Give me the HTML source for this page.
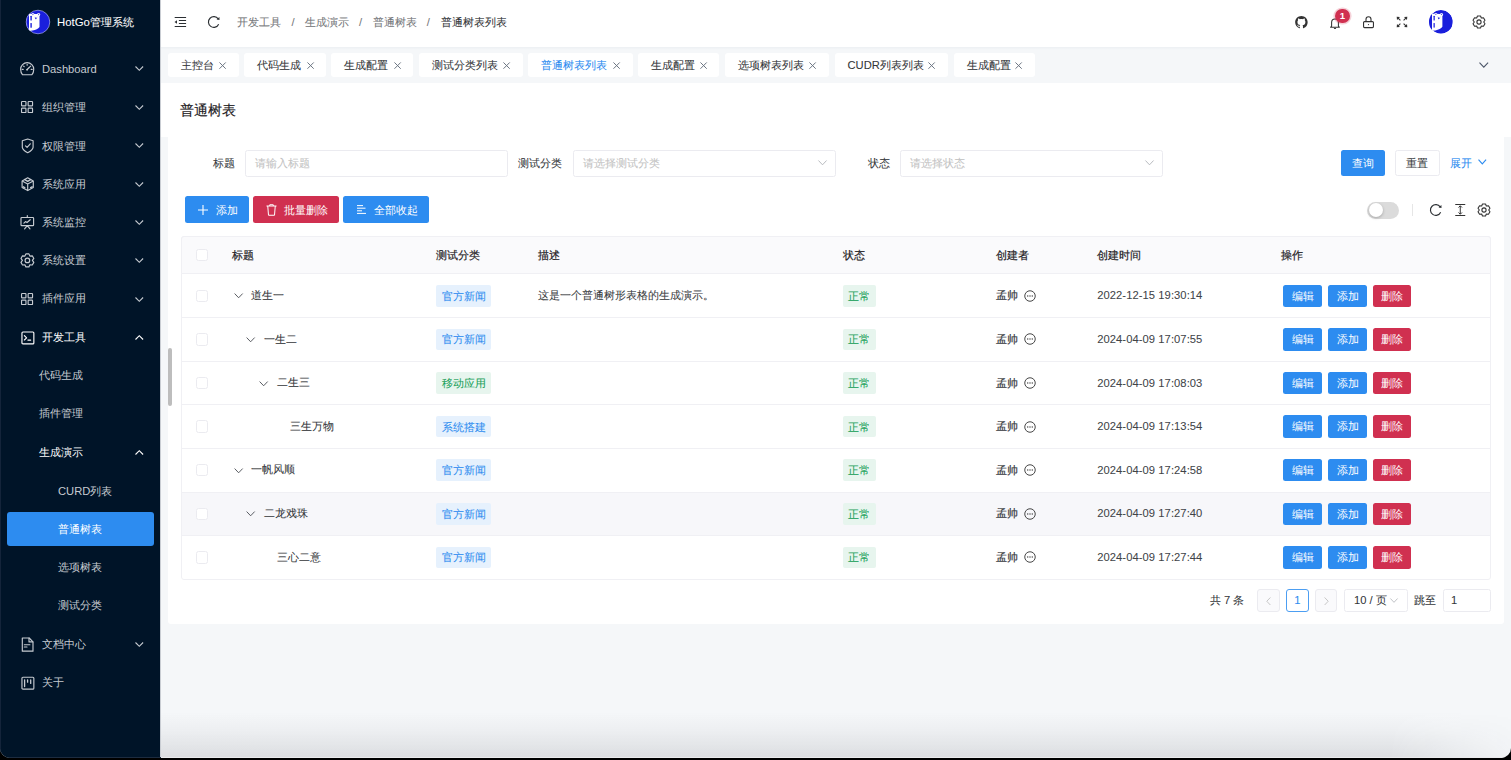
<!DOCTYPE html><html><head><meta charset="utf-8"><style>
*{box-sizing:border-box;margin:0;padding:0}
html,body{width:1511px;height:760px;overflow:hidden;background:#000}
body{font-family:"Liberation Sans",sans-serif;font-size:11.2px;color:#333639;position:relative;-webkit-text-stroke-width:0.06px}
.a{position:absolute;white-space:nowrap}
#win{position:absolute;left:0;top:0;width:1511px;height:758px;border-radius:0 0 10px 10px;overflow:hidden;background:#f5f7f9}
#side{position:absolute;left:0;top:0;width:160px;height:758px;background:#001428}
svg{position:absolute;overflow:visible}
.mt{position:absolute;font-size:11.2px;line-height:14px;color:#c6cbd1;white-space:nowrap;-webkit-text-stroke-width:0}
.tab{position:absolute;top:52.6px;height:24.8px;background:#fff;border-radius:3px}
.tab .t{position:absolute;left:13px;top:5.4px;line-height:14px;font-size:11.2px;color:#333639}
.btn{position:absolute;border-radius:2.5px;color:#fff;-webkit-text-stroke-width:0;font-size:11.2px;line-height:14px;text-align:center}
.tag{position:absolute;border-radius:2px;font-size:11.2px;line-height:14px}
.cb{position:absolute;left:195.5px;width:12.5px;height:12.5px;border:1px solid #ebebf0;border-radius:2.5px;background:#fff}
.inp{position:absolute;border:1px solid #ebebf0;border-radius:2.5px;background:#fff}
.ph{position:absolute;color:#c2c2c2;font-size:11.2px;line-height:14px;white-space:nowrap}
</style></head><body><div id="win">
<div id="side"><div class="a" style="left:0;top:0;width:1px;height:758px;background:#14243a"></div>
<svg style="left:26.2px;top:9.8px" width="24" height="24" viewBox="0 0 24 24"><defs><clipPath id="cl1"><circle cx="12" cy="12" r="12"/></clipPath></defs><g clip-path="url(#cl1)"><circle cx="12" cy="12" r="12" fill="#1a1fdc"/>
<path d="M3.3 3.8 L5.3 3.9 L11.5 4.0 L13.5 5.0 L13.5 17.0 Q11.5 19.6 6.5 20.6 L3.3 21.0 Q0 17 0 12 Q0 7 3.3 3.8 Z" fill="#fff"/>
<path d="M0 0 H3.3 V24 H0 Z" fill="#1a1fdc" opacity="0"/>
<rect x="4.4" y="5.7" width="1.4" height="4.9" rx="0.6" fill="#1a1fdc"/>
<rect x="4.4" y="13.0" width="1.4" height="4.8" rx="0.6" fill="#1a1fdc"/>
<circle cx="6.9" cy="4.5" r="1.6" fill="#fff"/><circle cx="6.9" cy="4.5" r="0.65" fill="#1a1fdc" opacity="0.7"/>
<circle cx="12.6" cy="4.5" r="1.6" fill="#fff"/><circle cx="12.6" cy="4.5" r="0.65" fill="#1a1fdc" opacity="0.7"/>
<ellipse cx="9.9" cy="8.3" rx="0.75" ry="1.0" fill="#1a1fdc"/>
<circle cx="8.4" cy="7.0" r="0.35" fill="#1a1fdc" opacity="0.5"/>
<circle cx="11.3" cy="7.0" r="0.35" fill="#1a1fdc" opacity="0.5"/><path d="M0 0 H3.0 V24 H0Z" fill="#1a1fdc"/></g><circle cx="12" cy="12" r="11.8" fill="none" stroke="#dfe3f5" stroke-width="0.5"/></svg>
<div class="a" style="left:57px;top:14.8px;line-height:14px;font-size:11.35px;color:#fff">HotGo管理系统</div>
<svg style="left:20.0px;top:62.40px" width="14.4" height="13.6" viewBox="0 0 14.4 13.6" fill="none" stroke="#c6cbd1" stroke-width="1.15" stroke-linecap="round" stroke-linejoin="round"><path d="M2.6 12.8 C1.3 11.4 0.65 9.4 0.65 7.2 A6.55 6.55 0 0 1 13.75 7.2 C13.75 9.4 13.1 11.4 11.8 12.8 Z"/><path d="M7.1 7.6 L9.4 5.2" stroke-width="1.3"/><circle cx="7.1" cy="7.7" r="0.9" fill="#c6cbd1" stroke="none"/><path d="M7.15 2.4v0.9M3.6 4.1l.6.6M10.7 4.1l-.6.6M2.2 7.4h1M11.2 7.4h1"/></svg>
<div class="mt" style="left:42px;top:61.90px;color:#c6cbd1">Dashboard</div>
<svg style="left:135.3px;top:66.4px" width="8.6" height="5" viewBox="0 0 8.6 5"><path d="M0.5 0.5 L4.3 4.3 L8.1 0.5" fill="none" stroke="#c6cbd1" stroke-width="1.1"/></svg>
<svg style="left:21.0px;top:101.28px" width="12.2" height="12.2" viewBox="0 0 12.2 12.2" fill="none" stroke="#c6cbd1" stroke-width="1.15" stroke-linecap="round" stroke-linejoin="round"><rect x="0.55" y="0.55" width="4.4" height="4.4" rx="0.6"/><rect x="7.15" y="0.55" width="4.4" height="4.4" rx="0.6"/><rect x="0.55" y="7.15" width="4.4" height="4.4" rx="0.6"/><rect x="7.15" y="7.15" width="4.4" height="4.4" rx="0.6"/></svg>
<div class="mt" style="left:42px;top:100.28px;color:#c6cbd1">组织管理</div>
<svg style="left:135.3px;top:104.8px" width="8.6" height="5" viewBox="0 0 8.6 5"><path d="M0.5 0.5 L4.3 4.3 L8.1 0.5" fill="none" stroke="#c6cbd1" stroke-width="1.1"/></svg>
<svg style="left:20.5px;top:137.85px" width="13.4" height="15.6" viewBox="0 0 13.4 15.6" fill="none" stroke="#c6cbd1" stroke-width="1.15" stroke-linecap="round" stroke-linejoin="round"><path d="M6.7 1.0 L12.1 2.8 V9.4 Q11.6 12.4 6.7 14.8 Q1.8 12.4 1.3 9.4 V2.8 Z"/><path d="M4.5 7.9 L6.1 9.4 L9.3 5.8"/></svg>
<div class="mt" style="left:42px;top:138.65px;color:#c6cbd1">权限管理</div>
<svg style="left:135.3px;top:143.2px" width="8.6" height="5" viewBox="0 0 8.6 5"><path d="M0.5 0.5 L4.3 4.3 L8.1 0.5" fill="none" stroke="#c6cbd1" stroke-width="1.1"/></svg>
<svg style="left:20.5px;top:177.03px" width="13.4" height="14.4" viewBox="0 0 13.4 14.4" fill="none" stroke="#c6cbd1" stroke-width="1.15" stroke-linecap="round" stroke-linejoin="round"><path d="M6.7 0.8 L12.3 3.9 V10.5 L6.7 13.6 L1.1 10.5 V3.9 Z"/><path d="M1.6 4.3 L6.7 7.0 L11.8 4.3 M6.7 7.0 V13.2"/><path d="M3.8 2.6 L6.7 4.3 L9.6 2.6" stroke-width="1.4"/><path d="M2.3 9.8 L3.8 10.6 M11.1 9.8 L9.6 10.6" stroke-width="1.4"/></svg>
<div class="mt" style="left:42px;top:177.03px;color:#c6cbd1">系统应用</div>
<svg style="left:135.3px;top:181.5px" width="8.6" height="5" viewBox="0 0 8.6 5"><path d="M0.5 0.5 L4.3 4.3 L8.1 0.5" fill="none" stroke="#c6cbd1" stroke-width="1.1"/></svg>
<svg style="left:20.0px;top:215.10px" width="14.6" height="14.6" viewBox="0 0 14.6 14.6" fill="none" stroke="#c6cbd1" stroke-width="1.15" stroke-linecap="round" stroke-linejoin="round"><rect x="1" y="2.5" width="12.6" height="8.2" rx="0.8"/><path d="M7.3 0.7 V2.5 M7.3 10.7 L4.6 13.9 M7.3 10.7 L10.0 13.9"/><path d="M3.9 8.1 L5.5 6.6 L7.05 7.5 L10.2 4.7"/></svg>
<div class="mt" style="left:42px;top:215.10px;color:#c6cbd1">系统监控</div>
<svg style="left:135.3px;top:219.9px" width="8.6" height="5" viewBox="0 0 8.6 5"><path d="M0.5 0.5 L4.3 4.3 L8.1 0.5" fill="none" stroke="#c6cbd1" stroke-width="1.1"/></svg>
<svg style="left:20.0px;top:253.37px" width="14.8" height="14.8" viewBox="0 0 14.8 14.8" fill="none" stroke="#c6cbd1" stroke-width="1.15" stroke-linecap="round" stroke-linejoin="round"><path d="M5.89 0.87 L8.91 0.87 L9.90 3.07 L12.30 2.83 L13.81 5.44 L12.40 7.40 L13.81 9.36 L12.30 11.97 L9.90 11.73 L8.91 13.93 L5.89 13.93 L4.90 11.73 L2.50 11.97 L0.99 9.36 L2.40 7.40 L0.99 5.44 L2.50 2.83 L4.90 3.07 Z"/><circle cx="7.4" cy="7.4" r="2.3"/></svg>
<div class="mt" style="left:42px;top:253.47px;color:#c6cbd1">系统设置</div>
<svg style="left:135.3px;top:258.3px" width="8.6" height="5" viewBox="0 0 8.6 5"><path d="M0.5 0.5 L4.3 4.3 L8.1 0.5" fill="none" stroke="#c6cbd1" stroke-width="1.1"/></svg>
<svg style="left:21.0px;top:293.15px" width="12.2" height="12.2" viewBox="0 0 12.2 12.2" fill="none" stroke="#c6cbd1" stroke-width="1.15" stroke-linecap="round" stroke-linejoin="round"><rect x="0.55" y="0.55" width="4.4" height="4.4" rx="0.6"/><rect x="7.15" y="0.55" width="4.4" height="4.4" rx="0.6"/><rect x="0.55" y="7.15" width="4.4" height="4.4" rx="0.6"/><rect x="7.15" y="7.15" width="4.4" height="4.4" rx="0.6"/></svg>
<div class="mt" style="left:42px;top:291.35px;color:#c6cbd1">插件应用</div>
<svg style="left:135.3px;top:296.6px" width="8.6" height="5" viewBox="0 0 8.6 5"><path d="M0.5 0.5 L4.3 4.3 L8.1 0.5" fill="none" stroke="#c6cbd1" stroke-width="1.1"/></svg>
<svg style="left:20.5px;top:330.62px" width="13.8" height="13.8" viewBox="0 0 13.8 13.8" fill="none" stroke="#fff" stroke-width="1.15" stroke-linecap="round" stroke-linejoin="round"><rect x="0.95" y="1.05" width="11.9" height="11.9" rx="1"/><path d="M3.4 4.6 L5.6 6.8 L3.4 9.0 M6.9 9.1 H9.7"/></svg>
<div class="mt" style="left:42px;top:329.72px;color:#fff">开发工具</div>
<svg style="left:135.3px;top:335.0px" width="8.6" height="5" viewBox="0 0 8.6 5"><path d="M0.5 4.5 L4.3 0.7 L8.1 4.5" fill="none" stroke="#fff" stroke-width="1.1"/></svg>
<div class="mt" style="left:39px;top:368.10px;color:#c6cbd1">代码生成</div>
<div class="mt" style="left:39px;top:406.47px;color:#c6cbd1">插件管理</div>
<div class="mt" style="left:39px;top:444.85px;color:#fff">生成演示</div>
<svg style="left:135.3px;top:450.1px" width="8.6" height="5" viewBox="0 0 8.6 5"><path d="M0.5 4.5 L4.3 0.7 L8.1 4.5" fill="none" stroke="#fff" stroke-width="1.1"/></svg>
<div class="mt" style="left:58px;top:484.02px;color:#c6cbd1">CURD列表</div>
<div class="a" style="left:7px;top:512.4px;width:147px;height:34px;background:#2d8cf0;border-radius:3px"></div>
<div class="mt" style="left:58px;top:521.60px;color:#fff">普通树表</div>
<div class="mt" style="left:58px;top:559.98px;color:#c6cbd1">选项树表</div>
<div class="mt" style="left:58px;top:598.35px;color:#c6cbd1">测试分类</div>
<svg style="left:21.0px;top:636.92px" width="13.0" height="15.2" viewBox="0 0 13.0 15.2" fill="none" stroke="#c6cbd1" stroke-width="1.15" stroke-linecap="round" stroke-linejoin="round"><path d="M1.3 1.0 H8.2 L12.0 4.8 V14.2 H1.3 Z"/><path d="M8.0 1.2 V4.9 H11.8" /><path d="M3.3 7.8 H8.9 M3.3 10.0 H6.0"/></svg>
<div class="mt" style="left:42px;top:636.73px;color:#c6cbd1">文档中心</div>
<svg style="left:135.3px;top:642.0px" width="8.6" height="5" viewBox="0 0 8.6 5"><path d="M0.5 0.5 L4.3 4.3 L8.1 0.5" fill="none" stroke="#c6cbd1" stroke-width="1.1"/></svg>
<svg style="left:20.5px;top:675.80px" width="14.0" height="14.0" viewBox="0 0 14.0 14.0" fill="none" stroke="#c6cbd1" stroke-width="1.15" stroke-linecap="round" stroke-linejoin="round"><rect x="0.95" y="1.25" width="11.9" height="11.9" rx="1"/><path d="M3.6 3.8 V10.5 M6.6 3.8 V6.2 M9.7 3.8 V7.4" stroke-width="1.3"/></svg>
<div class="mt" style="left:42px;top:675.10px;color:#c6cbd1">关于</div>
</div>
<div class="a" style="left:160px;top:0;width:1351px;height:47px;background:#fff"></div>
<div class="a" style="left:160px;top:0;width:1px;height:758px;background:#c9cdd3"></div>
<svg style="left:174px;top:16px" width="13" height="12" viewBox="0 0 13 12"><path d="M0.7 1.5H12.1M4.9 4.5H12.1M4.9 7.5H12.1M0.7 10.5H12.1" stroke="#2b2f33" stroke-width="1"/><path d="M0.5 6 L3.0 4.3 V7.7 Z" fill="#2b2f33"/></svg>
<svg style="left:207px;top:15px" width="14" height="14" viewBox="0 0 14 14"><path d="M11.65 9.26 A5.35 5.35 0 1 1 11.18 3.93" fill="none" stroke="#2b2f33" stroke-width="1.15"/><path d="M12.4 2.0 L12.5 5.1 L9.6 4.5 Z" fill="#2b2f33"/></svg>
<div class="a" style="left:237.3px;top:15px;line-height:14px;color:#76787b">开发工具</div>
<div class="a" style="left:305.0px;top:15px;line-height:14px;color:#76787b">生成演示</div>
<div class="a" style="left:373.0px;top:15px;line-height:14px;color:#76787b">普通树表</div>
<div class="a" style="left:440.6px;top:15px;line-height:14px;color:#333639">普通树表列表</div>
<div class="a" style="left:291.6px;top:15px;line-height:14px;color:#76787b">/</div>
<div class="a" style="left:359.0px;top:15px;line-height:14px;color:#76787b">/</div>
<div class="a" style="left:426.8px;top:15px;line-height:14px;color:#76787b">/</div>
<svg style="left:1295.1px;top:15.6px" width="12.8" height="12.5" viewBox="0 0 16 16"><path fill="#333" d="M8 0C3.58 0 0 3.58 0 8c0 3.54 2.29 6.53 5.47 7.59.4.07.55-.17.55-.38 0-.19-.01-.82-.01-1.49-2.01.37-2.53-.49-2.69-.94-.09-.23-.48-.94-.82-1.13-.28-.15-.68-.52-.01-.53.63-.01 1.08.58 1.23.82.72 1.21 1.87.87 2.33.66.07-.52.28-.87.51-1.07-1.78-.2-3.64-.89-3.64-3.95 0-.87.31-1.59.82-2.15-.08-.2-.36-1.02.08-2.12 0 0 .67-.21 2.2.82.64-.18 1.32-.27 2-.27.68 0 1.36.09 2 .27 1.53-1.04 2.2-.82 2.2-.82.44 1.1.16 1.92.08 2.12.51.56.82 1.27.82 2.15 0 3.07-1.87 3.75-3.65 3.95.29.25.54.73.54 1.48 0 1.07-.01 1.93-.01 2.2 0 .21.15.46.55.38A8.013 8.013 0 0016 8c0-4.42-3.58-8-8-8z"/></svg>
<svg style="left:1330px;top:16.5px" width="10" height="12" viewBox="0 0 10 12"><path d="M1.6 9.3 V5.6 A3.4 3.6 0 0 1 8.4 5.6 V9.3 L9.4 10.2 H0.6 Z" fill="none" stroke="#333" stroke-width="1.05" stroke-linejoin="round"/><path d="M3.9 11.2 Q5 12 6.1 11.2" fill="none" stroke="#333" stroke-width="1"/></svg>
<div class="a" style="left:1335px;top:8.6px;width:14.6px;height:14.6px;border-radius:7.3px;background:#d03050;box-shadow:0 0 0 1.6px rgba(208,48,80,0.22);color:#fff;font-size:9.6px;font-weight:bold;line-height:14.6px;text-align:center;-webkit-text-stroke-width:0">1</div>
<svg style="left:1363px;top:16px" width="11" height="12" viewBox="0 0 11 12"><rect x="0.55" y="5.6" width="9.9" height="6" rx="1" fill="none" stroke="#333" stroke-width="1.1"/><path d="M3 5.6 V3.3 A2.5 2.5 0 0 1 8 3.3 V5.6" fill="none" stroke="#333" stroke-width="1.1"/><circle cx="5.5" cy="8.6" r="0.6" fill="#333"/></svg>
<svg style="left:1396px;top:16px" width="12" height="12" viewBox="0 0 12 12"><path d="M1.6 1.6 L4.4 4.4 M10.4 1.6 L7.6 4.4 M1.6 10.4 L4.4 7.6 M10.4 10.4 L7.6 7.6" stroke="#333" stroke-width="1.1"/><path d="M0.7 0.7 L4.0 1.0 L1.0 4.0 Z M11.3 0.7 L8.0 1.0 L11.0 4.0 Z M0.7 11.3 L4.0 11.0 L1.0 8.0 Z M11.3 11.3 L8.0 11.0 L11.0 8.0 Z" fill="#333"/></svg>
<svg style="left:1428.7px;top:9.7px" width="23.8" height="23.8" viewBox="0 0 24 24"><defs><clipPath id="cl2"><circle cx="12" cy="12" r="12"/></clipPath></defs><g clip-path="url(#cl2)"><circle cx="12" cy="12" r="12" fill="#1a1fdc"/>
<path d="M3.3 3.8 L5.3 3.9 L11.5 4.0 L13.5 5.0 L13.5 17.0 Q11.5 19.6 6.5 20.6 L3.3 21.0 Q0 17 0 12 Q0 7 3.3 3.8 Z" fill="#fff"/>
<path d="M0 0 H3.3 V24 H0 Z" fill="#1a1fdc" opacity="0"/>
<rect x="4.4" y="5.7" width="1.4" height="4.9" rx="0.6" fill="#1a1fdc"/>
<rect x="4.4" y="13.0" width="1.4" height="4.8" rx="0.6" fill="#1a1fdc"/>
<circle cx="6.9" cy="4.5" r="1.6" fill="#fff"/><circle cx="6.9" cy="4.5" r="0.65" fill="#1a1fdc" opacity="0.7"/>
<circle cx="12.6" cy="4.5" r="1.6" fill="#fff"/><circle cx="12.6" cy="4.5" r="0.65" fill="#1a1fdc" opacity="0.7"/>
<ellipse cx="9.9" cy="8.3" rx="0.75" ry="1.0" fill="#1a1fdc"/>
<circle cx="8.4" cy="7.0" r="0.35" fill="#1a1fdc" opacity="0.5"/>
<circle cx="11.3" cy="7.0" r="0.35" fill="#1a1fdc" opacity="0.5"/><path d="M0 0 H3.1 V24 H0Z" fill="#1a1fdc"/><rect x="3.1" y="3.9" width="1.2" height="17" fill="#fff"/></g></svg>
<svg style="left:1472.10px;top:14.90px" width="14" height="14" viewBox="0 0 14 14"><path d="M5.50 0.98 L8.50 0.98 L9.35 2.93 L11.46 2.69 L12.96 5.29 L11.70 7.00 L12.96 8.71 L11.46 11.31 L9.35 11.07 L8.50 13.02 L5.50 13.02 L4.65 11.07 L2.54 11.31 L1.04 8.71 L2.30 7.00 L1.04 5.29 L2.54 2.69 L4.65 2.93 Z" fill="none" stroke="#333" stroke-width="1.1" stroke-linejoin="round"/><circle cx="7" cy="7" r="2.1" fill="none" stroke="#333" stroke-width="1.1"/></svg>
<div class="a" style="left:161px;top:47px;width:1350px;height:35.8px;background:#f5f7f9"></div>
<div class="a" style="left:161px;top:47px;width:1350px;height:2.8px;background:linear-gradient(#edf0f3,#f5f7f9)"></div>
<div class="tab" style="left:168.2px;width:70.8px"><div class="t" style="color:#333639">主控台</div>
<svg style="right:12.6px;top:9.8px" width="7.2" height="7.2" viewBox="0 0 8 8"><path d="M0.5 0.5 L7.5 7.5 M7.5 0.5 L0.5 7.5" stroke="#6b7482" stroke-width="1.1"/></svg></div>
<div class="tab" style="left:244.3px;width:82.2px"><div class="t" style="color:#333639">代码生成</div>
<svg style="right:12.6px;top:9.8px" width="7.2" height="7.2" viewBox="0 0 8 8"><path d="M0.5 0.5 L7.5 7.5 M7.5 0.5 L0.5 7.5" stroke="#6b7482" stroke-width="1.1"/></svg></div>
<div class="tab" style="left:331.3px;width:82.0px"><div class="t" style="color:#333639">生成配置</div>
<svg style="right:12.6px;top:9.8px" width="7.2" height="7.2" viewBox="0 0 8 8"><path d="M0.5 0.5 L7.5 7.5 M7.5 0.5 L0.5 7.5" stroke="#6b7482" stroke-width="1.1"/></svg></div>
<div class="tab" style="left:418.6px;width:104.1px"><div class="t" style="color:#333639">测试分类列表</div>
<svg style="right:12.6px;top:9.8px" width="7.2" height="7.2" viewBox="0 0 8 8"><path d="M0.5 0.5 L7.5 7.5 M7.5 0.5 L0.5 7.5" stroke="#6b7482" stroke-width="1.1"/></svg></div>
<div class="tab" style="left:528.0px;width:105.0px"><div class="t" style="color:#2d8cf0">普通树表列表</div>
<svg style="right:12.6px;top:9.8px" width="7.2" height="7.2" viewBox="0 0 8 8"><path d="M0.5 0.5 L7.5 7.5 M7.5 0.5 L0.5 7.5" stroke="#6b7482" stroke-width="1.1"/></svg></div>
<div class="tab" style="left:638.0px;width:81.4px"><div class="t" style="color:#333639">生成配置</div>
<svg style="right:12.6px;top:9.8px" width="7.2" height="7.2" viewBox="0 0 8 8"><path d="M0.5 0.5 L7.5 7.5 M7.5 0.5 L0.5 7.5" stroke="#6b7482" stroke-width="1.1"/></svg></div>
<div class="tab" style="left:725.0px;width:103.8px"><div class="t" style="color:#333639">选项树表列表</div>
<svg style="right:12.6px;top:9.8px" width="7.2" height="7.2" viewBox="0 0 8 8"><path d="M0.5 0.5 L7.5 7.5 M7.5 0.5 L0.5 7.5" stroke="#6b7482" stroke-width="1.1"/></svg></div>
<div class="tab" style="left:834.5px;width:113.7px"><div class="t" style="color:#333639">CUDR列表列表</div>
<svg style="right:12.6px;top:9.8px" width="7.2" height="7.2" viewBox="0 0 8 8"><path d="M0.5 0.5 L7.5 7.5 M7.5 0.5 L0.5 7.5" stroke="#6b7482" stroke-width="1.1"/></svg></div>
<div class="tab" style="left:953.5px;width:81.5px"><div class="t" style="color:#333639">生成配置</div>
<svg style="right:12.6px;top:9.8px" width="7.2" height="7.2" viewBox="0 0 8 8"><path d="M0.5 0.5 L7.5 7.5 M7.5 0.5 L0.5 7.5" stroke="#6b7482" stroke-width="1.1"/></svg></div>
<svg style="left:1479px;top:61.5px" width="9.6" height="6" viewBox="0 0 10 6"><path d="M0.5 0.5 L5 5.3 L9.5 0.5" fill="none" stroke="#4a5568" stroke-width="1.1"/></svg>
<div class="a" style="left:161px;top:82.8px;width:1350px;height:54.5px;background:#fff"></div>
<div class="a" style="left:180px;top:100.5px;font-size:14.2px;line-height:18px;color:#1f2225;-webkit-text-stroke:0.15px #1f2225">普通树表</div>
<div class="a" style="left:168px;top:137px;width:1336px;height:487px;background:#fff;border-radius:0 0 3px 3px"></div>
<div class="a" style="left:168px;top:348px;width:4px;height:58px;background:#bdbdbd;border-radius:2px"></div>
<div class="a" style="left:213px;top:156px;line-height:14px;color:#333639">标题</div>
<div class="inp" style="left:245px;top:149.6px;width:263.4px;height:27px"></div>
<div class="ph" style="left:255.3px;top:156px">请输入标题</div>
<div class="a" style="left:518.2px;top:156px;line-height:14px;color:#333639">测试分类</div>
<div class="inp" style="left:572.8px;top:149.6px;width:263px;height:27px"></div>
<div class="ph" style="left:582.7px;top:156px">请选择测试分类</div>
<svg style="left:817.5px;top:160px" width="9" height="5.5" viewBox="0 0 10 6"><path d="M0.5 0.5 L5 5.3 L9.5 0.5" fill="none" stroke="#b0b3b8" stroke-width="1"/></svg>
<div class="a" style="left:868px;top:156px;line-height:14px;color:#333639">状态</div>
<div class="inp" style="left:900.4px;top:149.6px;width:263px;height:27px"></div>
<div class="ph" style="left:910px;top:156px">请选择状态</div>
<svg style="left:1145px;top:160px" width="9" height="5.5" viewBox="0 0 10 6"><path d="M0.5 0.5 L5 5.3 L9.5 0.5" fill="none" stroke="#b0b3b8" stroke-width="1"/></svg>
<div class="btn" style="left:1340.7px;top:149.6px;width:44.4px;height:26.8px;background:#2d8cf0;line-height:26.8px">查询</div>
<div class="btn" style="left:1394.6px;top:149.6px;width:45px;height:26.8px;background:#fff;border:1px solid #ebebf0;color:#333639;line-height:24.8px">重置</div>
<div class="a" style="left:1449.6px;top:156px;line-height:14px;color:#2d8cf0">展开</div>
<svg style="left:1478.3px;top:159.3px" width="8.6" height="5.6" viewBox="0 0 10 6.5"><path d="M0.6 0.6 L5 5.6 L9.4 0.6" fill="none" stroke="#2d8cf0" stroke-width="1.3"/></svg>
<div class="btn" style="left:185.1px;top:196.4px;width:64px;height:26.5px;background:#2d8cf0"></div>
<svg style="left:198.4px;top:204.5px" width="10" height="10" viewBox="0 0 10 10"><path d="M5 0 V10 M0 5 H10" stroke="#fff" stroke-width="1.1"/></svg>
<div class="a" style="left:215.6px;top:202.5px;line-height:14px;color:#fff;-webkit-text-stroke-width:0">添加</div>
<div class="btn" style="left:253.2px;top:196.4px;width:85.8px;height:26.5px;background:#d03050"></div>
<svg style="left:265.5px;top:203.5px" width="11" height="12" viewBox="0 0 22 24"><path d="M1 4 H21 M7.5 4 V1.5 H14.5 V4 M3.5 4 L5 22.5 H17 L18.5 4" fill="none" stroke="#fff" stroke-width="2"/></svg>
<div class="a" style="left:283.6px;top:202.5px;line-height:14px;color:#fff;-webkit-text-stroke-width:0">批量删除</div>
<div class="btn" style="left:343.2px;top:196.4px;width:86.3px;height:26.5px;background:#2d8cf0"></div>
<svg style="left:357px;top:205px" width="9" height="9" viewBox="0 0 9 9"><path d="M0 0.6 H6 M0 3.2 H8.5 M0 5.8 H5 M0 8.4 H9" stroke="#fff" stroke-width="1"/></svg>
<div class="a" style="left:374.4px;top:202.5px;line-height:14px;color:#fff;-webkit-text-stroke-width:0">全部收起</div>
<div class="a" style="left:1367px;top:201.5px;width:31.7px;height:17.2px;border-radius:9px;background:#dbdbdb"></div>
<div class="a" style="left:1368.5px;top:203px;width:14.2px;height:14.2px;border-radius:7.1px;background:#fff;box-shadow:0 1px 3px rgba(0,0,0,.25)"></div>
<div class="a" style="left:1412px;top:203.5px;width:1px;height:12.5px;background:#e6e6e6"></div>
<svg style="left:1429px;top:203.3px" width="14" height="14" viewBox="0 0 14 14"><path d="M11.65 9.26 A5.35 5.35 0 1 1 11.18 3.93" fill="none" stroke="#2b2f33" stroke-width="1.15"/><path d="M12.4 2.0 L12.5 5.1 L9.6 4.5 Z" fill="#2b2f33"/></svg>
<svg style="left:1455px;top:204px" width="10.5" height="12" viewBox="0 0 21 24"><path d="M0.5 1 H20.5 M0.5 23 H20.5 M10.5 4 V20" fill="none" stroke="#333" stroke-width="2"/><path d="M7 7 L10.5 3.5 L14 7 M7 17 L10.5 20.5 L14 17" fill="none" stroke="#333" stroke-width="2"/></svg>
<svg style="left:1477.00px;top:203.30px" width="14" height="14" viewBox="0 0 14 14"><path d="M5.50 0.98 L8.50 0.98 L9.35 2.93 L11.46 2.69 L12.96 5.29 L11.70 7.00 L12.96 8.71 L11.46 11.31 L9.35 11.07 L8.50 13.02 L5.50 13.02 L4.65 11.07 L2.54 11.31 L1.04 8.71 L2.30 7.00 L1.04 5.29 L2.54 2.69 L4.65 2.93 Z" fill="none" stroke="#333" stroke-width="1.1" stroke-linejoin="round"/><circle cx="7" cy="7" r="2.1" fill="none" stroke="#333" stroke-width="1.1"/></svg>
<div class="a" style="left:181px;top:236px;width:1309.5px;height:343.8px;border:1px solid #f0f0f4;border-radius:3px"></div>
<div class="a" style="left:181px;top:236px;width:1309.5px;height:38px;background:#fafafc;border:1px solid #f0f0f4;border-bottom:1px solid #f0f0f4;border-radius:3px 3px 0 0"></div>
<div class="cb" style="top:248.7px"></div>
<div class="a" style="left:232.2px;top:248px;line-height:14px;color:#1f2225;-webkit-text-stroke:0.2px #1f2225">标题</div>
<div class="a" style="left:435.5px;top:248px;line-height:14px;color:#1f2225;-webkit-text-stroke:0.2px #1f2225">测试分类</div>
<div class="a" style="left:538.0px;top:248px;line-height:14px;color:#1f2225;-webkit-text-stroke:0.2px #1f2225">描述</div>
<div class="a" style="left:842.5px;top:248px;line-height:14px;color:#1f2225;-webkit-text-stroke:0.2px #1f2225">状态</div>
<div class="a" style="left:995.5px;top:248px;line-height:14px;color:#1f2225;-webkit-text-stroke:0.2px #1f2225">创建者</div>
<div class="a" style="left:1097.2px;top:248px;line-height:14px;color:#1f2225;-webkit-text-stroke:0.2px #1f2225">创建时间</div>
<div class="a" style="left:1280.5px;top:248px;line-height:14px;color:#1f2225;-webkit-text-stroke:0.2px #1f2225">操作</div>
<div class="cb" style="top:289.5px"></div>
<svg style="left:233.5px;top:293.3px" width="9.3" height="5.5" viewBox="0 0 10 6"><path d="M0.6 0.6 L5 5.2 L9.4 0.6" fill="none" stroke="#4a4e54" stroke-width="1.0"/></svg>
<div class="a" style="left:251.3px;top:288.0px;line-height:14px;color:#333639">道生一</div>
<div class="tag" style="left:435.8px;top:285.0px;width:55.4px;height:21.6px;background:#e6f1fd;color:#2d8cf0;padding:3.8px 0 0 6px">官方新闻</div>
<div class="a" style="left:538px;top:287.6px;line-height:14px;color:#3a3d41">这是一个普通树形表格的生成演示。</div>
<div class="tag" style="left:842.5px;top:285.0px;width:33.4px;height:21.6px;background:#e7f5ee;color:#18a058;padding:3.8px 0 0 5.5px">正常</div>
<div class="a" style="left:995.5px;top:288.4px;line-height:14px;color:#333639;-webkit-text-stroke-width:0.18px">孟帅</div>
<svg style="left:1023.8px;top:289.8px" width="12" height="12" viewBox="0 0 24 24"><circle cx="12" cy="12" r="10.5" fill="none" stroke="#333" stroke-width="1.8"/><circle cx="7.5" cy="12" r="1.3" fill="#333"/><circle cx="12" cy="12" r="1.3" fill="#333"/><circle cx="16.5" cy="12" r="1.3" fill="#333"/></svg>
<div class="a" style="left:1097.2px;top:288.4px;line-height:14px;color:#404347;-webkit-text-stroke-width:0.05px;letter-spacing:0.07px">2022-12-15 19:30:14</div>
<div class="btn" style="left:1283.2px;top:284.60px;width:38.6px;height:22.4px;background:#2d8cf0;line-height:22.4px;text-indent:1px">编辑</div>
<div class="btn" style="left:1328.2px;top:284.60px;width:38.6px;height:22.4px;background:#2d8cf0;line-height:22.4px;text-indent:1px">添加</div>
<div class="btn" style="left:1372.7px;top:284.60px;width:38.6px;height:22.4px;background:#d03050;line-height:22.4px;text-indent:1px">删除</div>
<div class="a" style="left:182px;top:317.1px;width:1307.5px;height:1px;background:#f0f0f4"></div>
<div class="cb" style="top:333.1px"></div>
<svg style="left:246.3px;top:336.9px" width="9.3" height="5.5" viewBox="0 0 10 6"><path d="M0.6 0.6 L5 5.2 L9.4 0.6" fill="none" stroke="#4a4e54" stroke-width="1.0"/></svg>
<div class="a" style="left:264.1px;top:331.6px;line-height:14px;color:#333639">一生二</div>
<div class="tag" style="left:435.8px;top:328.6px;width:55.4px;height:21.6px;background:#e6f1fd;color:#2d8cf0;padding:3.8px 0 0 6px">官方新闻</div>
<div class="tag" style="left:842.5px;top:328.6px;width:33.4px;height:21.6px;background:#e7f5ee;color:#18a058;padding:3.8px 0 0 5.5px">正常</div>
<div class="a" style="left:995.5px;top:332.0px;line-height:14px;color:#333639;-webkit-text-stroke-width:0.18px">孟帅</div>
<svg style="left:1023.8px;top:333.4px" width="12" height="12" viewBox="0 0 24 24"><circle cx="12" cy="12" r="10.5" fill="none" stroke="#333" stroke-width="1.8"/><circle cx="7.5" cy="12" r="1.3" fill="#333"/><circle cx="12" cy="12" r="1.3" fill="#333"/><circle cx="16.5" cy="12" r="1.3" fill="#333"/></svg>
<div class="a" style="left:1097.2px;top:332.0px;line-height:14px;color:#404347;-webkit-text-stroke-width:0.05px;letter-spacing:0.07px">2024-04-09 17:07:55</div>
<div class="btn" style="left:1283.2px;top:328.20px;width:38.6px;height:22.4px;background:#2d8cf0;line-height:22.4px;text-indent:1px">编辑</div>
<div class="btn" style="left:1328.2px;top:328.20px;width:38.6px;height:22.4px;background:#2d8cf0;line-height:22.4px;text-indent:1px">添加</div>
<div class="btn" style="left:1372.7px;top:328.20px;width:38.6px;height:22.4px;background:#d03050;line-height:22.4px;text-indent:1px">删除</div>
<div class="a" style="left:182px;top:360.7px;width:1307.5px;height:1px;background:#f0f0f4"></div>
<div class="cb" style="top:376.7px"></div>
<svg style="left:259.1px;top:380.5px" width="9.3" height="5.5" viewBox="0 0 10 6"><path d="M0.6 0.6 L5 5.2 L9.4 0.6" fill="none" stroke="#4a4e54" stroke-width="1.0"/></svg>
<div class="a" style="left:276.9px;top:375.2px;line-height:14px;color:#333639">二生三</div>
<div class="tag" style="left:435.8px;top:372.2px;width:55.4px;height:21.6px;background:#e7f5ee;color:#18a058;padding:3.8px 0 0 6px">移动应用</div>
<div class="tag" style="left:842.5px;top:372.2px;width:33.4px;height:21.6px;background:#e7f5ee;color:#18a058;padding:3.8px 0 0 5.5px">正常</div>
<div class="a" style="left:995.5px;top:375.6px;line-height:14px;color:#333639;-webkit-text-stroke-width:0.18px">孟帅</div>
<svg style="left:1023.8px;top:377.0px" width="12" height="12" viewBox="0 0 24 24"><circle cx="12" cy="12" r="10.5" fill="none" stroke="#333" stroke-width="1.8"/><circle cx="7.5" cy="12" r="1.3" fill="#333"/><circle cx="12" cy="12" r="1.3" fill="#333"/><circle cx="16.5" cy="12" r="1.3" fill="#333"/></svg>
<div class="a" style="left:1097.2px;top:375.6px;line-height:14px;color:#404347;-webkit-text-stroke-width:0.05px;letter-spacing:0.07px">2024-04-09 17:08:03</div>
<div class="btn" style="left:1283.2px;top:371.80px;width:38.6px;height:22.4px;background:#2d8cf0;line-height:22.4px;text-indent:1px">编辑</div>
<div class="btn" style="left:1328.2px;top:371.80px;width:38.6px;height:22.4px;background:#2d8cf0;line-height:22.4px;text-indent:1px">添加</div>
<div class="btn" style="left:1372.7px;top:371.80px;width:38.6px;height:22.4px;background:#d03050;line-height:22.4px;text-indent:1px">删除</div>
<div class="a" style="left:182px;top:404.3px;width:1307.5px;height:1px;background:#f0f0f4"></div>
<div class="cb" style="top:420.3px"></div>
<div class="a" style="left:289.7px;top:418.8px;line-height:14px;color:#333639">三生万物</div>
<div class="tag" style="left:435.8px;top:415.8px;width:55.4px;height:21.6px;background:#e6f1fd;color:#2d8cf0;padding:3.8px 0 0 6px">系统搭建</div>
<div class="tag" style="left:842.5px;top:415.8px;width:33.4px;height:21.6px;background:#e7f5ee;color:#18a058;padding:3.8px 0 0 5.5px">正常</div>
<div class="a" style="left:995.5px;top:419.2px;line-height:14px;color:#333639;-webkit-text-stroke-width:0.18px">孟帅</div>
<svg style="left:1023.8px;top:420.6px" width="12" height="12" viewBox="0 0 24 24"><circle cx="12" cy="12" r="10.5" fill="none" stroke="#333" stroke-width="1.8"/><circle cx="7.5" cy="12" r="1.3" fill="#333"/><circle cx="12" cy="12" r="1.3" fill="#333"/><circle cx="16.5" cy="12" r="1.3" fill="#333"/></svg>
<div class="a" style="left:1097.2px;top:419.2px;line-height:14px;color:#404347;-webkit-text-stroke-width:0.05px;letter-spacing:0.07px">2024-04-09 17:13:54</div>
<div class="btn" style="left:1283.2px;top:415.40px;width:38.6px;height:22.4px;background:#2d8cf0;line-height:22.4px;text-indent:1px">编辑</div>
<div class="btn" style="left:1328.2px;top:415.40px;width:38.6px;height:22.4px;background:#2d8cf0;line-height:22.4px;text-indent:1px">添加</div>
<div class="btn" style="left:1372.7px;top:415.40px;width:38.6px;height:22.4px;background:#d03050;line-height:22.4px;text-indent:1px">删除</div>
<div class="a" style="left:182px;top:447.9px;width:1307.5px;height:1px;background:#f0f0f4"></div>
<div class="cb" style="top:463.9px"></div>
<svg style="left:233.5px;top:467.7px" width="9.3" height="5.5" viewBox="0 0 10 6"><path d="M0.6 0.6 L5 5.2 L9.4 0.6" fill="none" stroke="#4a4e54" stroke-width="1.0"/></svg>
<div class="a" style="left:251.3px;top:462.4px;line-height:14px;color:#333639">一帆风顺</div>
<div class="tag" style="left:435.8px;top:459.4px;width:55.4px;height:21.6px;background:#e6f1fd;color:#2d8cf0;padding:3.8px 0 0 6px">官方新闻</div>
<div class="tag" style="left:842.5px;top:459.4px;width:33.4px;height:21.6px;background:#e7f5ee;color:#18a058;padding:3.8px 0 0 5.5px">正常</div>
<div class="a" style="left:995.5px;top:462.8px;line-height:14px;color:#333639;-webkit-text-stroke-width:0.18px">孟帅</div>
<svg style="left:1023.8px;top:464.2px" width="12" height="12" viewBox="0 0 24 24"><circle cx="12" cy="12" r="10.5" fill="none" stroke="#333" stroke-width="1.8"/><circle cx="7.5" cy="12" r="1.3" fill="#333"/><circle cx="12" cy="12" r="1.3" fill="#333"/><circle cx="16.5" cy="12" r="1.3" fill="#333"/></svg>
<div class="a" style="left:1097.2px;top:462.8px;line-height:14px;color:#404347;-webkit-text-stroke-width:0.05px;letter-spacing:0.07px">2024-04-09 17:24:58</div>
<div class="btn" style="left:1283.2px;top:459.00px;width:38.6px;height:22.4px;background:#2d8cf0;line-height:22.4px;text-indent:1px">编辑</div>
<div class="btn" style="left:1328.2px;top:459.00px;width:38.6px;height:22.4px;background:#2d8cf0;line-height:22.4px;text-indent:1px">添加</div>
<div class="btn" style="left:1372.7px;top:459.00px;width:38.6px;height:22.4px;background:#d03050;line-height:22.4px;text-indent:1px">删除</div>
<div class="a" style="left:182px;top:492.0px;width:1307.5px;height:43.6px;background:#f7f7fa"></div>
<div class="a" style="left:182px;top:491.5px;width:1307.5px;height:1px;background:#f0f0f4"></div>
<div class="cb" style="top:507.5px"></div>
<svg style="left:246.3px;top:511.3px" width="9.3" height="5.5" viewBox="0 0 10 6"><path d="M0.6 0.6 L5 5.2 L9.4 0.6" fill="none" stroke="#4a4e54" stroke-width="1.0"/></svg>
<div class="a" style="left:264.1px;top:506.0px;line-height:14px;color:#333639">二龙戏珠</div>
<div class="tag" style="left:435.8px;top:503.0px;width:55.4px;height:21.6px;background:#e6f1fd;color:#2d8cf0;padding:3.8px 0 0 6px">官方新闻</div>
<div class="tag" style="left:842.5px;top:503.0px;width:33.4px;height:21.6px;background:#e7f5ee;color:#18a058;padding:3.8px 0 0 5.5px">正常</div>
<div class="a" style="left:995.5px;top:506.4px;line-height:14px;color:#333639;-webkit-text-stroke-width:0.18px">孟帅</div>
<svg style="left:1023.8px;top:507.8px" width="12" height="12" viewBox="0 0 24 24"><circle cx="12" cy="12" r="10.5" fill="none" stroke="#333" stroke-width="1.8"/><circle cx="7.5" cy="12" r="1.3" fill="#333"/><circle cx="12" cy="12" r="1.3" fill="#333"/><circle cx="16.5" cy="12" r="1.3" fill="#333"/></svg>
<div class="a" style="left:1097.2px;top:506.4px;line-height:14px;color:#404347;-webkit-text-stroke-width:0.05px;letter-spacing:0.07px">2024-04-09 17:27:40</div>
<div class="btn" style="left:1283.2px;top:502.60px;width:38.6px;height:22.4px;background:#2d8cf0;line-height:22.4px;text-indent:1px">编辑</div>
<div class="btn" style="left:1328.2px;top:502.60px;width:38.6px;height:22.4px;background:#2d8cf0;line-height:22.4px;text-indent:1px">添加</div>
<div class="btn" style="left:1372.7px;top:502.60px;width:38.6px;height:22.4px;background:#d03050;line-height:22.4px;text-indent:1px">删除</div>
<div class="a" style="left:182px;top:535.1px;width:1307.5px;height:1px;background:#f0f0f4"></div>
<div class="cb" style="top:551.1px"></div>
<div class="a" style="left:276.9px;top:549.6px;line-height:14px;color:#333639">三心二意</div>
<div class="tag" style="left:435.8px;top:546.6px;width:55.4px;height:21.6px;background:#e6f1fd;color:#2d8cf0;padding:3.8px 0 0 6px">官方新闻</div>
<div class="tag" style="left:842.5px;top:546.6px;width:33.4px;height:21.6px;background:#e7f5ee;color:#18a058;padding:3.8px 0 0 5.5px">正常</div>
<div class="a" style="left:995.5px;top:550.0px;line-height:14px;color:#333639;-webkit-text-stroke-width:0.18px">孟帅</div>
<svg style="left:1023.8px;top:551.4px" width="12" height="12" viewBox="0 0 24 24"><circle cx="12" cy="12" r="10.5" fill="none" stroke="#333" stroke-width="1.8"/><circle cx="7.5" cy="12" r="1.3" fill="#333"/><circle cx="12" cy="12" r="1.3" fill="#333"/><circle cx="16.5" cy="12" r="1.3" fill="#333"/></svg>
<div class="a" style="left:1097.2px;top:550.0px;line-height:14px;color:#404347;-webkit-text-stroke-width:0.05px;letter-spacing:0.07px">2024-04-09 17:27:44</div>
<div class="btn" style="left:1283.2px;top:546.20px;width:38.6px;height:22.4px;background:#2d8cf0;line-height:22.4px;text-indent:1px">编辑</div>
<div class="btn" style="left:1328.2px;top:546.20px;width:38.6px;height:22.4px;background:#2d8cf0;line-height:22.4px;text-indent:1px">添加</div>
<div class="btn" style="left:1372.7px;top:546.20px;width:38.6px;height:22.4px;background:#d03050;line-height:22.4px;text-indent:1px">删除</div>
<div class="a" style="left:1210px;top:593px;line-height:14px;color:#333639">共 7 条</div>
<div class="a" style="left:1257.1px;top:589.3px;width:23px;height:22.3px;border:1px solid #ebebf0;border-radius:3px;background:#fafafc"></div>
<svg style="left:1266px;top:596.5px" width="5" height="8.5" viewBox="0 0 5 9"><path d="M4.5 0.5 L0.7 4.5 L4.5 8.5" fill="none" stroke="#c2c2c2" stroke-width="1"/></svg>
<div class="a" style="left:1286.2px;top:589.3px;width:22.6px;height:22.3px;border:1px solid #4c9ef2;border-radius:3px;color:#2d8cf0;text-align:center;line-height:20.3px">1</div>
<div class="a" style="left:1314.7px;top:589.3px;width:22.6px;height:22.3px;border:1px solid #ebebf0;border-radius:3px;background:#fafafc"></div>
<svg style="left:1323.5px;top:596.5px" width="5" height="8.5" viewBox="0 0 5 9"><path d="M0.5 0.5 L4.3 4.5 L0.5 8.5" fill="none" stroke="#c2c2c2" stroke-width="1"/></svg>
<div class="inp" style="left:1343.9px;top:589.3px;width:63.9px;height:22.3px"></div>
<div class="a" style="left:1354px;top:593px;line-height:14px;color:#333639">10 / 页</div>
<svg style="left:1390px;top:598px" width="8" height="5" viewBox="0 0 10 6"><path d="M0.5 0.5 L5 5.3 L9.5 0.5" fill="none" stroke="#b0b3b8" stroke-width="1"/></svg>
<div class="a" style="left:1414.4px;top:593px;line-height:14px;color:#333639">跳至</div>
<div class="inp" style="left:1442.9px;top:589.3px;width:47.7px;height:22.3px"></div>
<div class="a" style="left:1451px;top:593px;line-height:14px;color:#333639">1</div>
<div class="a" style="left:161px;top:712px;width:1350px;height:45px;background:linear-gradient(rgba(0,0,0,0),rgba(30,30,40,0.035) 40%,rgba(30,30,40,0.11));-webkit-mask-image:linear-gradient(to right,#000 0,#000 91%,rgba(0,0,0,0.15) 100%)"></div>
<div class="a" style="left:161px;top:757px;width:1350px;height:1px;background:#ececee"></div>
<div class="a" style="left:0;top:757px;width:161px;height:1px;background:#1d2c40"></div>
</div></body></html>
